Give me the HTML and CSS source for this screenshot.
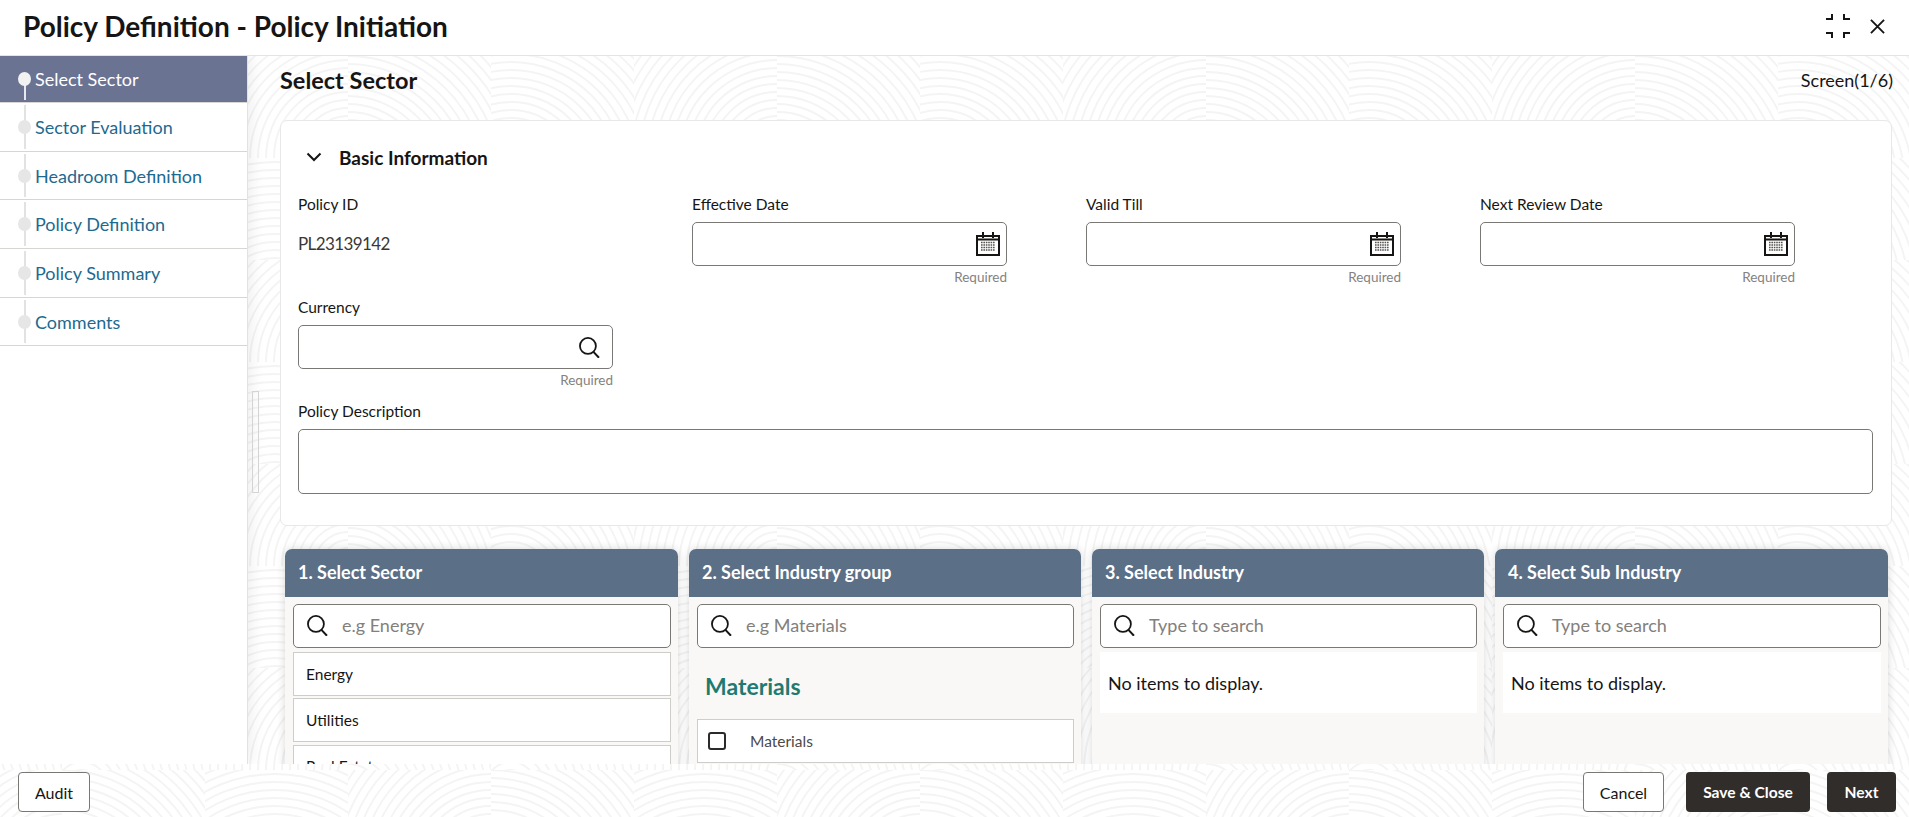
FILE: index.html
```html
<!DOCTYPE html>
<html lang="en">
<head>
    <meta charset="UTF-8">
    <title>Policy Definition - Policy Initiation</title>
    <link rel="stylesheet" href="styles.css">
</head>
<body>
    <!-- shared icons and the page background texture -->
    <svg class="texture" aria-hidden="true">
        <defs>
            <g id="rings" fill="none" stroke="#f4f4f4" stroke-width="1.9">
                <circle r="10"/><circle r="18"/><circle r="26"/><circle r="34"/><circle r="42"/><circle r="50"/>
                <circle r="58"/><circle r="66"/><circle r="74"/><circle r="82"/><circle r="90"/><circle r="98"/>
                <circle r="106"/><circle r="114"/><circle r="122"/><circle r="130"/><circle r="138"/><circle r="146"/>
                <circle r="154"/><circle r="162"/><circle r="170"/><circle r="178"/><circle r="186"/><circle r="194"/>
            </g>
            <pattern id="tile" width="429" height="204" patternUnits="userSpaceOnUse" x="205" y="56">
                <svg width="143" height="102"><use href="#rings" x="143" y="102"/></svg>
                <svg x="143" width="143" height="102"><use href="#rings" x="0" y="130"/></svg>
                <svg x="286" width="143" height="102"><use href="#rings" x="20" y="120"/></svg>
                <svg y="102" width="143" height="102"><use href="#rings" x="70" y="150"/></svg>
                <svg x="143" y="102" width="143" height="102"><use href="#rings" x="143" y="102"/></svg>
                <svg x="286" y="102" width="143" height="102"><use href="#rings" x="0" y="130"/></svg>
            </pattern>
            <symbol id="icon-search" viewBox="1 1 20 20">
                <circle cx="9.5" cy="9.5" r="7.6" fill="none" stroke="#161513" stroke-width="1.7"/>
                <path d="M14.8 15.2l5.2 5.6" fill="none" stroke="#161513" stroke-width="1.9"/>
            </symbol>
            <symbol id="icon-calendar" viewBox="0 0 24 24">
                <path d="M1 4h22v19H1zM1 7.5h22" fill="none" stroke="#161513" stroke-width="2"/>
                <path d="M7 0v6M17 0v6" fill="none" stroke="#161513" stroke-width="2"/>
                <path d="M5 10.5h14M5 13h14M5 15.5h14M5 18h14" fill="none" stroke="#55524f" stroke-width="1.6" stroke-dasharray="1.6 .8"/>
            </symbol>
        </defs>
        <rect width="100%" height="100%" fill="url(#tile)"/>
    </svg>

    <div class="page">
        <header class="title-bar">
            <h1>Policy Definition - Policy Initiation</h1>
            <div class="window-tools">
                <svg class="tool-collapse" viewBox="0 0 24 24" aria-label="Minimize">
                    <path d="M0 5h6V0M24 5h-6V0M0 19h6v5M24 19h-6v5" fill="none" stroke="#161513" stroke-width="2"/>
                </svg>
                <svg class="tool-close" viewBox="0 0 16 16" aria-label="Close">
                    <path d="M1 1l14 14M15 1L1 15" fill="none" stroke="#161513" stroke-width="2"/>
                </svg>
            </div>
        </header>

        <div class="main">
            <nav class="sidebar">
                <ul class="steps">
                    <li class="step active"><a>Select Sector</a></li>
                    <li class="step"><a>Sector Evaluation</a></li>
                    <li class="step"><a>Headroom Definition</a></li>
                    <li class="step"><a>Policy Definition</a></li>
                    <li class="step"><a>Policy Summary</a></li>
                    <li class="step"><a>Comments</a></li>
                </ul>
            </nav>
            <div class="splitter"></div>

            <main class="content">
                <div class="content-head">
                    <h2>Select Sector</h2>
                    <span class="screen-count">Screen(1/6)</span>
                </div>

                <section class="panel">
                    <div class="panel-head">
                        <svg class="chevron" viewBox="0 0 16 10"><path d="M1.5 1.5L8 8l6.5-6.5" fill="none" stroke="#161513" stroke-width="2"/></svg>
                        <h3>Basic Information</h3>
                    </div>
                    <div class="form-grid">
                        <div class="field">
                            <label>Policy ID</label>
                            <div class="read-value">PL23139142</div>
                        </div>
                        <div class="field">
                            <label>Effective Date</label>
                            <div class="input"><svg class="icon-date"><use href="#icon-calendar"/></svg></div>
                            <span class="hint">Required</span>
                        </div>
                        <div class="field">
                            <label>Valid Till</label>
                            <div class="input"><svg class="icon-date"><use href="#icon-calendar"/></svg></div>
                            <span class="hint">Required</span>
                        </div>
                        <div class="field">
                            <label>Next Review Date</label>
                            <div class="input"><svg class="icon-date"><use href="#icon-calendar"/></svg></div>
                            <span class="hint">Required</span>
                        </div>
                        <div class="field">
                            <label>Currency</label>
                            <div class="input"><svg class="icon-lookup"><use href="#icon-search"/></svg></div>
                            <span class="hint">Required</span>
                        </div>
                    </div>
                    <div class="field">
                        <label>Policy Description</label>
                        <div class="input textarea"></div>
                    </div>
                </section>

                <div class="cards">
                    <section class="card">
                        <div class="card-head">1. Select Sector</div>
                        <div class="card-body">
                            <div class="search"><svg class="icon-lookup"><use href="#icon-search"/></svg><span>e.g Energy</span></div>
                            <div class="list-item">Energy</div>
                            <div class="list-item">Utilities</div>
                            <div class="list-item">Real Estate</div>
                        </div>
                    </section>
                    <section class="card">
                        <div class="card-head">2. Select Industry group</div>
                        <div class="card-body">
                            <div class="search"><svg class="icon-lookup"><use href="#icon-search"/></svg><span>e.g Materials</span></div>
                            <h4 class="group-title">Materials</h4>
                            <div class="list-item check-item"><span class="checkbox"></span>Materials</div>
                        </div>
                    </section>
                    <section class="card">
                        <div class="card-head">3. Select Industry</div>
                        <div class="card-body">
                            <div class="search"><svg class="icon-lookup"><use href="#icon-search"/></svg><span>Type to search</span></div>
                            <div class="empty">No items to display.</div>
                        </div>
                    </section>
                    <section class="card">
                        <div class="card-head">4. Select Sub Industry</div>
                        <div class="card-body">
                            <div class="search"><svg class="icon-lookup"><use href="#icon-search"/></svg><span>Type to search</span></div>
                            <div class="empty">No items to display.</div>
                        </div>
                    </section>
                </div>
            </main>
        </div>

        <footer class="footer">
            <button class="btn btn-audit">Audit</button>
            <div class="footer-actions">
                <button class="btn btn-cancel">Cancel</button>
                <button class="btn btn-dark btn-save">Save &amp; Close</button>
                <button class="btn btn-dark btn-next">Next</button>
            </div>
        </footer>
    </div>
</body>
</html>
```

FILE: styles.css
```css
* {
    box-sizing: border-box;
}
body {
    margin: 0;
    height: 100vh;
    overflow: hidden;
    background: #fff;
    color: #161513;
    font-family: Lato, "Noto Sans", sans-serif;
}
h1, h2, h3, h4, ul {
    margin: 0;
    padding: 0;
}
.texture {
    position: absolute;
    top: 0;
    left: 0;
    width: 100%;
    height: 100%;
}
.page {
    position: relative;
    display: flex;
    flex-direction: column;
    height: 100vh;
}

/* title bar */
.title-bar {
    display: flex;
    align-items: center;
    justify-content: space-between;
    flex: none;
    height: 56px;
    padding: 0 24px 3px 23px;
    background: #fff;
    border-bottom: 1px solid #e4e4e4;
}
.title-bar h1 {
    font-size: 28px;
    font-weight: 700;
}
.window-tools {
    display: flex;
    align-items: center;
    gap: 20px;
}
.tool-collapse {
    width: 24px;
    height: 24px;
}
.tool-close {
    width: 15px;
    height: 15px;
}

/* left steps */
.main {
    position: relative;
    display: flex;
    flex: 1;
    min-height: 0;
    overflow: hidden;
}
.sidebar {
    flex: none;
    width: 248px;
    background: #fff;
    border-right: 1px solid #dfe3e8;
    box-shadow: 3px 0 14px rgba(0, 0, 0, 0.07);
}
.steps {
    list-style: none;
}
.step {
    position: relative;
    display: flex;
    align-items: center;
    height: 48.7px;
    padding-left: 35px;
    border-bottom: 1px solid #d8d6d2;
    font-size: 18px;
    color: #1d6a8f;
}
.step::before {
    content: "";
    position: absolute;
    left: 23.5px;
    top: 2px;
    bottom: 2px;
    width: 2px;
    background: #e2e2e2;
}
.step::after {
    content: "";
    position: absolute;
    left: 18px;
    top: 17px;
    width: 13px;
    height: 14px;
    border-radius: 50%;
    background: #e6e6e6;
}
.step.active {
    height: 47px;
    color: #fff;
    background: #6b7393;
    border-bottom-color: #d8d6d2;
}
.step.active::before {
    background: #e8e8ee;
    top: 20px;
}
.step.active::after {
    background: #f2f2f2;
    top: 16px;
}
.splitter {
    position: absolute;
    left: 252px;
    top: 335px;
    width: 7px;
    height: 102px;
    border: 1px solid #d4d4d4;
}

/* content */
.content {
    flex: 1;
    min-width: 0;
    padding: 0 17px 0 32px;
}
.content-head {
    display: flex;
    align-items: center;
    justify-content: space-between;
    height: 50px;
    margin-bottom: 14px;
    padding-bottom: 2px;
}
.content-head h2 {
    font-size: 23.5px;
    font-weight: 700;
}
.screen-count {
    margin-right: -1px;
    font-size: 18px;
}
.panel {
    height: 406px;
    padding: 24px 18px 0 17px;
    background: #fff;
    border: 1px solid #e8e8e8;
    border-radius: 7px;
}
.panel-head {
    display: flex;
    align-items: center;
    height: 24px;
    margin-bottom: 26px;
    padding-left: 8px;
}
.chevron {
    width: 16px;
    height: 10px;
    margin-right: 17px;
}
.panel-head h3 {
    font-size: 19px;
    font-weight: 700;
}
.form-grid {
    display: grid;
    grid-template-columns: repeat(4, 315px);
    column-gap: 79px;
    row-gap: 10px;
}
.field {
    display: flex;
    flex-direction: column;
}
.field label {
    height: 20px;
    margin-bottom: 7px;
    font-size: 15.5px;
    line-height: 18px;
}
.read-value {
    display: flex;
    align-items: center;
    height: 44px;
    padding-bottom: 2px;
    font-size: 17px;
    letter-spacing: -0.6px;
    color: #3a3836;
}
.input {
    display: flex;
    align-items: center;
    justify-content: flex-end;
    height: 44px;
    padding-right: 6px;
    background: #fff;
    border: 1px solid #7a7875;
    border-radius: 5px;
}
.textarea {
    height: 65px;
}
.icon-date {
    width: 24px;
    height: 24px;
}
.icon-lookup {
    flex: none;
    width: 21px;
    height: 21px;
}
.input .icon-lookup {
    margin-right: 6px;
}
.hint {
    height: 20px;
    margin-top: 2px;
    font-size: 13.5px;
    line-height: 19px;
    text-align: right;
    color: #85827e;
}
.form-grid + .field {
    margin-top: 11px;
}

/* selection cards */
.cards {
    display: grid;
    grid-template-columns: 393px 392px 392px 393px;
    gap: 11px;
    margin: 23px 0 0 5px;
}
.card {
    height: 320px;
    border-radius: 7px 7px 0 0;
    background: #f9f8f6;
    box-shadow: 0 0 8px rgba(0, 0, 0, 0.16);
}
.card-head {
    display: flex;
    align-items: center;
    height: 48px;
    padding: 0 0 2px 13px;
    border-radius: 7px 7px 0 0;
    background: #5b6f87;
    color: #fff;
    font-size: 18px;
    font-weight: 700;
}
.card-body {
    padding: 7px 7px 0 8px;
}
.search {
    display: flex;
    align-items: center;
    height: 44px;
    margin-bottom: 4px;
    padding: 0 0 2px 13px;
    background: #fff;
    border: 1px solid #7a7875;
    border-radius: 5px;
    font-size: 18px;
    color: #83807c;
}
.search .icon-lookup {
    margin-right: 14px;
}
.list-item {
    display: flex;
    align-items: center;
    height: 44px;
    margin-bottom: 2.4px;
    padding: 0 0 1px 12px;
    background: #fff;
    border: 1px solid #cfcdca;
    font-size: 15.5px;
}
.group-title {
    margin: 24px 0 19px 8px;
    font-size: 23px;
    line-height: 28px;
    font-weight: 700;
    color: #1f7a72;
}
.check-item {
    padding-left: 10px;
    color: #4d4a47;
}
.checkbox {
    flex: none;
    width: 18px;
    height: 18px;
    margin-right: 24px;
    border: 2px solid #2d2b29;
    border-radius: 3px;
}
.empty {
    height: 61px;
    padding: 20px 0 0 8px;
    background: #fff;
    font-size: 18px;
    line-height: 22px;
}

/* footer buttons */
.footer {
    display: flex;
    justify-content: space-between;
    flex: none;
    height: 53px;
    padding: 8px 13px 0 18px;
}
.footer-actions {
    display: flex;
}
.btn {
    height: 40px;
    padding: 0;
    border: 1px solid #7a7875;
    border-radius: 4px;
    background: #fff;
    color: #161513;
    font-family: inherit;
    font-size: 16px;
}
.btn-dark {
    border: none;
    background: #312d2a;
    color: #fff;
    font-size: 15.6px;
    font-weight: 700;
}
.btn-audit {
    width: 72px;
}
.btn-cancel {
    width: 81px;
    margin-right: 22px;
}
.btn-save {
    width: 124px;
    margin-right: 17px;
}
.btn-next {
    width: 69px;
}
```
